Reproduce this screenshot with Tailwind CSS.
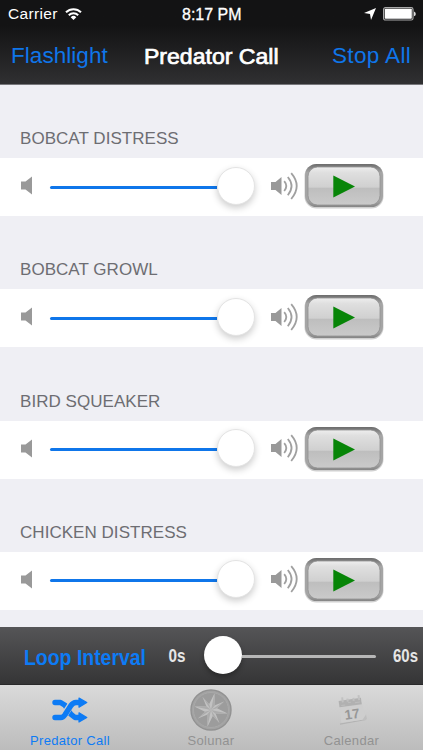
<!DOCTYPE html>
<html lang="en">
<head>
    <meta charset="UTF-8">
    <meta name="viewport" content="width=device-width, initial-scale=1.0">
    <title>Predator Call</title>
    <script src="https://cdn.jsdelivr.net/npm/@tailwindcss/browser@4"></script>
</head>
<body class="h-[750px] w-[423px] overflow-hidden flex flex-col bg-[#efeff4] font-['Liberation_Sans',sans-serif]">
    <header class="h-[85px] shrink-0 bg-linear-to-b from-[#131314] from-30% to-[#303032] border-b border-[#77777b] text-white">
        <!-- Status bar -->
        <div class="h-7 grid grid-cols-3 items-center pl-2 pr-[7px] text-[15.5px]">
            <div class="flex items-center gap-[7px]">
                <span class="tracking-[0.35px]">Carrier</span>
                <svg class="w-[17px] h-3" viewBox="0 0 17 12" fill="none" stroke="white" stroke-width="2">
                    <path d="M1 4.3a10.6 10.6 0 0 1 15 0M3.8 7.2a6.6 6.6 0 0 1 9.4 0"/>
                    <path d="M8.5 12L5.7 9.2a4 4 0 0 1 5.6 0z" fill="white" stroke="none"/>
                </svg>
            </div>
            <span class="text-center whitespace-nowrap">
                <svg class="inline-block w-[62px] h-5 overflow-visible" viewBox="0 0 62 20"><text x="1" y="15" font-size="16" textLength="59.500" lengthAdjust="spacingAndGlyphs" fill="white" stroke="white" stroke-width=".3">8:17 PM</text></svg>
            </span>
            <div class="flex items-center justify-end gap-[7px]">
                <svg class="w-3 h-3" viewBox="0 0 12 12" fill="white"><path d="M12 0L7 12L6 6L0 5z"/></svg>
                <svg class="w-[33px] h-[14px]" viewBox="0 0 33 14">
                    <rect x=".6" y=".6" width="29.4" height="12.4" rx="1.8" fill="none" stroke="#a9a9a9" stroke-width="1.2"/>
                    <rect x="1.8" y="1.8" width="27" height="10" rx=".8" fill="white"/>
                    <path d="M31 4.6q1.8.6 1.8 2.3t-1.8 2.3z" fill="#ddd"/>
                </svg>
            </div>
        </div>
        <!-- Navigation bar -->
        <div class="h-14 flex items-center pl-[11px] text-[22.5px]">
            <a class="text-[#0f76ea] w-[132px] tracking-[0.05px]">Flashlight</a>
            <h1 class="w-[189px]">
                <svg class="w-[140px] h-8" viewBox="0 0 140 32"><text x="1" y="23.5" font-size="22.5" textLength="134.5" lengthAdjust="spacingAndGlyphs" fill="white" stroke="white" stroke-width=".7">Predator Call</text></svg>
            </h1>
            <a class="text-[#0f76ea] tracking-[0.35px] whitespace-nowrap">Stop All</a>
        </div>
    </header>

    <main id="calls" class="h-[542px] shrink-0 overflow-hidden"></main>

    <!-- Loop interval -->
    <div class="h-[58px] shrink-0 flex items-center bg-linear-to-b from-[#555557] to-[#353536] border-b border-[#29292a]">
        <svg class="w-[204px] h-[58px] shrink-0" viewBox="0 0 204 58" font-weight="bold">
            <text x="24" y="37.5" font-size="22.5" textLength="122" lengthAdjust="spacingAndGlyphs" fill="#0d7bf5">Loop Interval</text>
            <text x="168.5" y="34.5" font-size="18" textLength="17" lengthAdjust="spacingAndGlyphs" fill="#e6e6e6">0s</text>
        </svg>
        <div class="flex items-center w-[172px]">
            <div class="size-[38px] shrink-0 rounded-full bg-white shadow-[0_3px_5px_rgba(0,0,0,0.3)] mb-px"></div>
            <div class="h-[3px] grow rounded-r-full bg-[#b7b7b7] mt-0.5"></div>
        </div>
        <svg class="w-[47px] h-[58px] shrink-0" viewBox="0 0 47 58" font-weight="bold">
            <text x="17" y="34.5" font-size="18" textLength="25" lengthAdjust="spacingAndGlyphs" fill="#e6e6e6">60s</text>
        </svg>
    </div>

    <!-- Tab bar -->
    <nav class="h-[65px] shrink-0 grid grid-cols-[140px_142px_1fr] bg-linear-to-b from-[#dadada] to-[#bcbcbc] text-[13px] leading-4 text-center text-[#929292]">
        <div class="flex flex-col items-center text-[#0d7bf5]">
            <svg class="w-[36px] h-[26px] mt-3" viewBox="0 0 36 26" fill="none" stroke="#0d7bf5" stroke-width="5.4" stroke-linejoin="round">
                <path d="M3 5.5H8.500L13 8.300L18.800 17.200L23 20.500H28" stroke-linecap="round"/>
                <path d="M11.500 19L19.500 7" stroke="#cfcfcf" stroke-width="7"/>
                <path d="M3 20.500H9Q11 20.500 13 17.700L18.800 8.800Q21 5.500 24 5.500H28" stroke-linecap="round"/>
                <path d="M27 1L34.8 5.5L27 10.2zM27 15.8L34.8 20.5L27 25z" fill="#0d7bf5" stroke-width="1.2"/>
            </svg>
            <span class="mt-[10px] tracking-[0.3px]">Predator Call</span>
        </div>
        <div class="flex flex-col items-center">
            <svg class="size-[42px] mt-1" viewBox="0 0 42 42">
                <circle cx="21" cy="21" r="20" fill="#a3a3a3" stroke="#929292" stroke-width="1.4"/>
                <circle cx="21" cy="21" r="17.5" fill="#9c9c9c" stroke="#a9a9a9"/>
                <g transform="rotate(12 21 21)">
                    <path d="M21 4l3 11.5 8-5.5-5.500 8L38 21l-11.500 3 5.500 8-8-5.500L21 38l-3-11.500-8 5.500 5.500-8L4 21l11.500-3-5.500-8 8 5.500z" fill="#c2c2c2"/>
                    <path d="M21 4v17l3-5.500zM38 21H21l5.500 3zM21 38V21l-3 5.500zM4 21h17l-5.500-3zM10 10l11 11-3-5.500zM32 10L21 21l5.500-3zM32 32L21 21l3 5.500zM10 32l11-11-5.500 3z" fill="#acacac"/>
                </g>
            </svg>
            <span class="mt-[2px] tracking-[0.3px]">Solunar</span>
        </div>
        <div class="flex flex-col items-center">
            <svg class="w-[34px] h-[34px] mt-2" viewBox="0 0 34 34">
                <path d="M4 31.2L30 26.5" stroke="#b3b3b3" stroke-width="1.2"/>
                <g transform="rotate(-8 17 17)">
                    <path d="M4.500 11H26.500L29 28H3.500z" fill="#cecece"/>
                    <path d="M4 6H26.500V12.500H4z" fill="#b1b1b1"/>
                    <path d="M8 3v5M13 5v3M19 5v3M24.500 3v5" stroke="#c1c1c1" stroke-width="2"/>
                    <path d="M6 11h4M13 9h3M20 10h5" stroke="#bdbdbd"/>
                    <text x="15.5" y="25.5" font-size="13.5" font-weight="bold" text-anchor="middle" fill="#979797">17</text>
                </g>
                <path d="M26 27.500L30 21.500L31 26z" fill="#bfbfbf"/>
            </svg>
            <span class="mt-[6px] mr-0.5 tracking-[0.35px]">Calendar</span>
        </div>
    </nav>

    <script>
        const calls = ['BOBCAT DISTRESS', 'BOBCAT GROWL', 'BIRD SQUEAKER', 'CHICKEN DISTRESS'];

        // One section per call: title, volume slider, play button
        document.getElementById('calls').innerHTML = calls.map(name => `
            <section class="h-[131.3px]">
                <h2 class="h-[73px] pl-5 pt-[44px] text-[17px] leading-5 tracking-[0.04px] text-[#6d6d72]">${name}</h2>
                <div class="h-[58px] bg-white flex items-center pl-5">
                    <svg class="w-[13px] h-[19px] mb-[3px]" viewBox="0 0 13 19" fill="#999"><path d="M1 5.5H5.5L12 .5V18.5L5.5 13.5H1z"/></svg>
                    <div class="ml-[17px] flex items-center w-[205px]">
                        <div class="h-[3px] w-[167px] rounded-l-full bg-[#0f76ea]"></div>
                        <div class="size-[38px] shrink-0 rounded-full bg-white border border-[#e4e4e4] shadow-[0_3px_7px_rgba(0,0,0,0.2)] mb-[3px]"></div>
                    </div>
                    <svg class="w-[27px] h-[28px] ml-4 mb-[3px]" viewBox="0 0 27 28" fill="none" stroke="#a0a0a0" stroke-width="1.8">
                        <path d="M0 10H4.5L10.5 5V23L4.5 18H0z" fill="#999" stroke="none"/>
                        <path d="M13.2 9.2q4.2 4.8 0 9.8M16.8 5q7.5 9 0 18.2M20.2 1.2q11 12.8 0 25.8"/>
                    </svg>
                    <svg class="w-[80px] h-[46px] ml-[6px] mb-[2px]" viewBox="0 0 80 46">
                        <defs>
                            <linearGradient id="face" x2="0" y2="1">
                                <stop offset="0" stop-color="#eee"/><stop offset=".15" stop-color="#dfdfdf"/>
                                <stop offset=".53" stop-color="#d0d0d0"/><stop offset=".56" stop-color="#bebebe"/>
                                <stop offset="1" stop-color="#cacaca"/>
                            </linearGradient>
                            <linearGradient id="rim" x2="0" y2="1">
                                <stop offset="0" stop-color="#6c6c6c"/><stop offset=".2" stop-color="#a5a5a5"/>
                                <stop offset=".85" stop-color="#a5a5a5"/><stop offset="1" stop-color="#858585"/>
                            </linearGradient>
                        </defs>
                        <rect x=".5" y="1" width="79" height="44.5" rx="12" fill="#d0d0d0"/>
                        <rect x="1" y="1" width="78" height="43" rx="11.5" fill="url(#rim)"/>
                        <rect x="4" y="4" width="72" height="38" rx="9.5" fill="url(#face)" stroke="#929292" stroke-width=".8"/>
                        <path d="M29.3 12.5L51 23.5L29.3 34.5z" fill="#078507"/>
                    </svg>
                </div>
            </section>`).join('');
    </script>
</body>
</html>
